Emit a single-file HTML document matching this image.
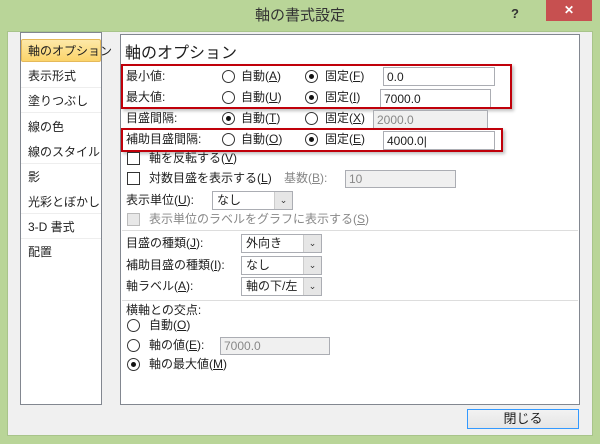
<!DOCTYPE html><html><head><meta charset="utf-8"><style>
*{margin:0;padding:0;box-sizing:border-box}
body{width:600px;height:444px;background:#b9d598;font-family:"Liberation Sans","Noto Sans CJK JP",sans-serif;font-size:12px;color:#1e1e1e;position:relative;overflow:hidden}
.a{position:absolute;white-space:nowrap;line-height:14px}
.box{position:absolute;border:1px solid #abadb3;background:#fff}
.dis{background:#f0f0f0;color:#888}
.r{position:absolute;width:13px;height:13px;border:1px solid #333;border-radius:50%;background:#fff}
.r.on::after{content:"";position:absolute;left:3px;top:3px;width:5px;height:5px;border-radius:50%;background:#111}
.c{position:absolute;width:13px;height:13px;border:1px solid #333;background:#fff}
.dd{position:absolute;border:1px solid #abadb3;background:#fff;height:19px}
.dd span{position:absolute;left:4px;top:1px;line-height:15px}
.dd i{position:absolute;right:0;top:0;width:18px;height:17px;background:#e6e6e6;border-left:1px solid #ccc;font-style:normal;font-size:9px;text-align:center;line-height:17px;color:#333}
.sep{position:absolute;height:1px;background:#ddd}
.li{position:absolute;left:28px}
.red{position:absolute;border:2px solid #c0000a;box-shadow:2px 2px 3px rgba(0,0,0,.25)}
</style></head><body>
<div class="a" style="left:0;top:8px;width:600px;text-align:center;font-size:15px;line-height:16px;color:#333">軸の書式設定</div>
<div class="a" style="left:511px;top:7px;font-size:13px;font-weight:bold;color:#333">?</div>
<div style="position:absolute;left:546px;top:0;width:46px;height:21px;background:#c75050;color:#fff;text-align:center;font-size:12px;line-height:21px;font-weight:bold">✕</div>
<div style="position:absolute;left:7px;top:31px;width:586px;height:405px;background:#f0f0f0;border:1px solid #a8c48a"></div>
<div style="position:absolute;left:20px;top:32px;width:82px;height:373px;background:#fff;border:1px solid #828790"></div>
<div style="position:absolute;left:21px;top:39px;width:80px;height:23px;background:linear-gradient(#fde9a8,#fbd46a);border:1px solid #e5b95a;border-radius:2px"></div>
<div class="a li" style="top:44px">軸のオプション</div>
<div class="a li" style="top:69px">表示形式</div>
<div class="sep" style="left:21px;top:87px;width:80px;background:#eee"></div>
<div class="a li" style="top:94px">塗りつぶし</div>
<div class="sep" style="left:21px;top:112px;width:80px;background:#eee"></div>
<div class="a li" style="top:120px">線の色</div>
<div class="a li" style="top:145px">線のスタイル</div>
<div class="sep" style="left:21px;top:163px;width:80px;background:#eee"></div>
<div class="a li" style="top:170px">影</div>
<div class="a li" style="top:195px">光彩とぼかし</div>
<div class="sep" style="left:21px;top:213px;width:80px;background:#eee"></div>
<div class="a li" style="top:220px">3-D 書式</div>
<div class="sep" style="left:21px;top:238px;width:80px;background:#eee"></div>
<div class="a li" style="top:245px">配置</div>
<div style="position:absolute;left:120px;top:34px;width:460px;height:371px;background:#fff;border:1px solid #828790"></div>
<div class="a" style="left:125px;top:45px;font-size:16px;line-height:18px">軸のオプション</div>
<div class="a" style="left:126px;top:69px">最小値:</div>
<div class="r" style="left:222px;top:70px"></div><div class="a" style="left:241px;top:69px">自動(<u>A</u>)</div>
<div class="r on" style="left:305px;top:70px"></div><div class="a" style="left:325px;top:69px">固定(<u>F</u>)</div>
<div class="box" style="left:383px;top:67px;width:112px;height:19px"><span class="a" style="left:3px;top:2px">0.0</span></div>
<div class="a" style="left:126px;top:90px">最大値:</div>
<div class="r" style="left:222px;top:91px"></div><div class="a" style="left:241px;top:90px">自動(<u>U</u>)</div>
<div class="r on" style="left:305px;top:91px"></div><div class="a" style="left:325px;top:90px">固定(<u>I</u>)</div>
<div class="box" style="left:380px;top:89px;width:111px;height:19px"><span class="a" style="left:3px;top:2px">7000.0</span></div>
<div class="red" style="left:121px;top:64px;width:391px;height:45px"></div>
<div class="a" style="left:126px;top:111px">目盛間隔:</div>
<div class="r on" style="left:222px;top:112px"></div><div class="a" style="left:241px;top:111px">自動(<u>T</u>)</div>
<div class="r" style="left:305px;top:112px"></div><div class="a" style="left:325px;top:111px">固定(<u>X</u>)</div>
<div class="box dis" style="left:373px;top:110px;width:115px;height:19px"><span class="a" style="left:3px;top:2px">2000.0</span></div>
<div class="a" style="left:126px;top:132px">補助目盛間隔:</div>
<div class="r" style="left:222px;top:133px"></div><div class="a" style="left:241px;top:132px">自動(<u>O</u>)</div>
<div class="r on" style="left:305px;top:133px"></div><div class="a" style="left:325px;top:132px">固定(<u>E</u>)</div>
<div class="box" style="left:383px;top:131px;width:112px;height:19px"><span class="a" style="left:3px;top:2px">4000.0|</span></div>
<div class="red" style="left:121px;top:128px;width:382px;height:24px"></div>
<div class="c" style="left:127px;top:152px"></div><div class="a" style="left:149px;top:151px">軸を反転する(<u>V</u>)</div>
<div class="c" style="left:127px;top:172px"></div><div class="a" style="left:149px;top:171px">対数目盛を表示する(<u>L</u>)</div>
<div class="a" style="left:284px;top:171px;color:#888">基数(<u>B</u>):</div>
<div class="box dis" style="left:345px;top:170px;width:111px;height:18px"><span class="a" style="left:3px;top:1px">10</span></div>
<div class="a" style="left:126px;top:193px">表示単位(<u>U</u>):</div>
<div class="dd" style="left:212px;top:191px;width:81px"><span>なし</span><i>⌄</i></div>
<div class="c" style="left:127px;top:213px;background:#e8e8e8;border-color:#bbb"></div><div class="a" style="left:149px;top:212px;color:#888">表示単位のラベルをグラフに表示する(<u>S</u>)</div>
<div class="sep" style="left:122px;top:230px;width:456px"></div>
<div class="a" style="left:126px;top:236px">目盛の種類(<u>J</u>):</div>
<div class="dd" style="left:241px;top:234px;width:81px"><span>外向き</span><i>⌄</i></div>
<div class="a" style="left:126px;top:258px">補助目盛の種類(<u>I</u>):</div>
<div class="dd" style="left:241px;top:256px;width:81px"><span>なし</span><i>⌄</i></div>
<div class="a" style="left:126px;top:279px">軸ラベル(<u>A</u>):</div>
<div class="dd" style="left:241px;top:277px;width:81px"><span>軸の下/左</span><i>⌄</i></div>
<div class="sep" style="left:122px;top:300px;width:456px"></div>
<div class="a" style="left:126px;top:303px">横軸との交点:</div>
<div class="r" style="left:127px;top:319px"></div><div class="a" style="left:149px;top:318px">自動(<u>O</u>)</div>
<div class="r" style="left:127px;top:339px"></div><div class="a" style="left:149px;top:338px">軸の値(<u>E</u>):</div>
<div class="box dis" style="left:220px;top:337px;width:110px;height:18px"><span class="a" style="left:3px;top:1px">7000.0</span></div>
<div class="r on" style="left:127px;top:358px"></div><div class="a" style="left:149px;top:357px">軸の最大値(<u>M</u>)</div>
<div style="position:absolute;left:467px;top:409px;width:112px;height:20px;border:1px solid #3399ff;background:linear-gradient(#f2f2f2,#e5e5e5);text-align:center;line-height:18px;font-size:13px">閉じる</div>
</body></html>
